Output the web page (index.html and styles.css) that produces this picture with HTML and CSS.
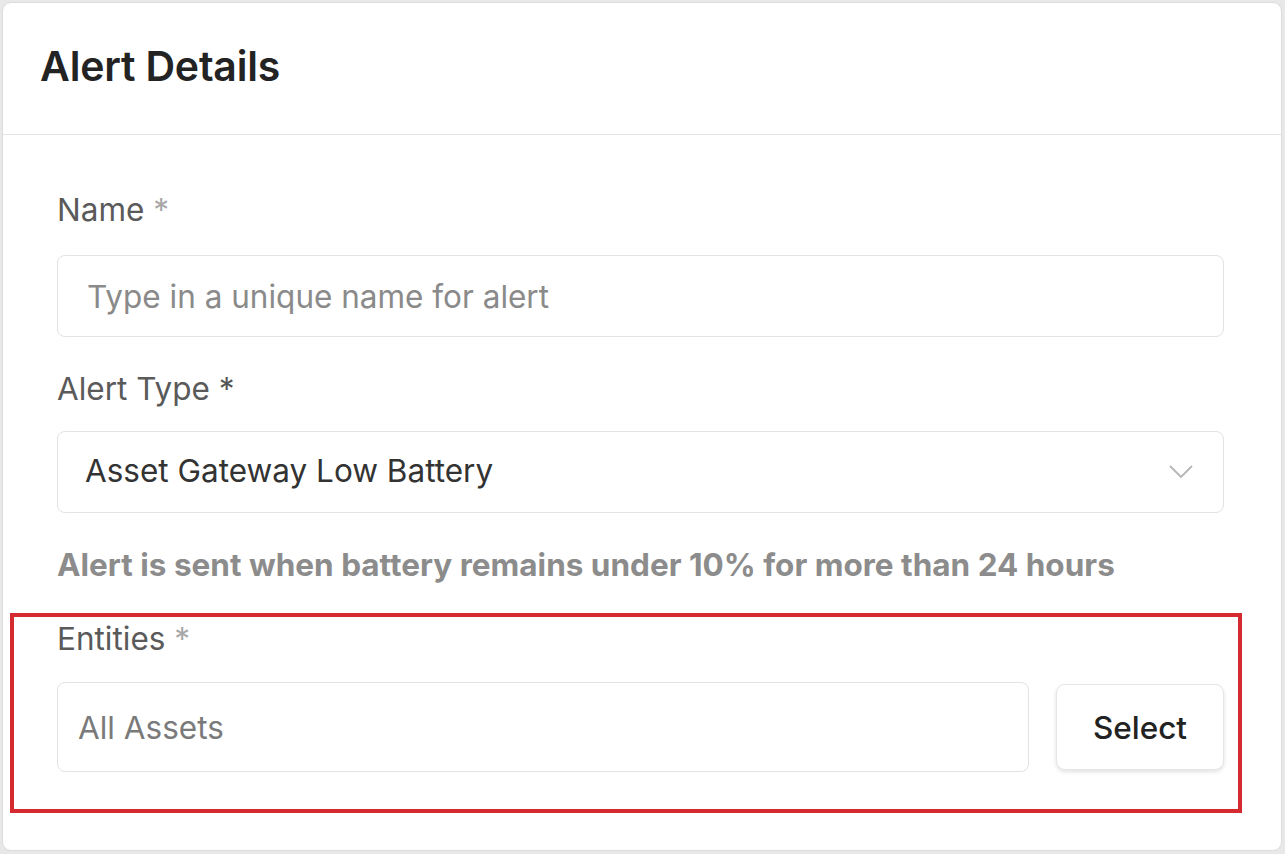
FILE: index.html
```html
<!DOCTYPE html>
<html lang="en">
<head>
<meta charset="utf-8">
<title>Alert Details</title>
<link rel="stylesheet" href="styles.css">
</head>
<body>
<div class="card">
  <div class="card-header">
    <h1 class="title">Alert Details</h1>
  </div>
  <div class="card-body">
    <div class="field">
      <label class="label">Name <span class="req">*</span></label>
      <div class="input placeholder">Type in a unique name for alert</div>
    </div>
    <div class="field">
      <label class="label label-type">Alert Type <span class="req dark">*</span></label>
      <div class="input select">
        <span class="value">Asset Gateway Low Battery</span>
        <svg class="chevron" width="26" height="16" viewBox="0 0 26 16" aria-hidden="true">
          <path d="M2 2 L13 13 L24 2" fill="none" stroke="#b5b5b5" stroke-width="1.8"/>
        </svg>
      </div>
      <p class="help">Alert is sent when battery remains under 10% for more than 24 hours</p>
    </div>
    <div class="field entities">
      <label class="label label-entities">Entities <span class="req">*</span></label>
      <div class="entity-row">
        <div class="input entity-input">All Assets</div>
        <button class="btn">Select</button>
      </div>
    </div>
  </div>
</div>
</body>
</html>
```

FILE: styles.css
```css
html, body {
  margin: 0;
  padding: 0;
}
body {
  background: #e8e8e8;
  font-family: Inter, "Noto Sans", "Liberation Sans", sans-serif;
  width: 1285px;
  height: 854px;
  overflow: hidden;
}
.card {
  box-sizing: border-box;
  margin: 2px 3px 0 2px;
  height: 849px;
  background: #fff;
  border: 1px solid #dcdcdc;
  border-radius: 9px;
}
.card-header {
  box-sizing: border-box;
  height: 132px;
  border-bottom: 1px solid #e4e4e4;
  display: flex;
  align-items: center;
  padding-left: 37px;
  padding-bottom: 6px;
}
.title {
  margin: 0;
  font-size: 41px;
  font-weight: 600;
  color: #232323;
  letter-spacing: -0.2px;
}
.card-body {
  padding: 55px 57px 0 54px;
}
.field {
  display: flex;
  flex-direction: column;
}
.label {
  font-size: 31.5px;
  line-height: 40px;
  color: #5a5a5a;
  margin-bottom: 25px;
}
.label-type {
  margin-bottom: 22px;
}
.label-entities {
  margin-bottom: 23px;
}
.req {
  color: #a8a8a8;
}
.req.dark {
  color: #555;
}
.input {
  box-sizing: border-box;
  height: 82px;
  border: 1.5px solid #e3e3e3;
  border-radius: 8px;
  display: flex;
  align-items: center;
  font-size: 31.5px;
  padding-left: 29px;
  margin-bottom: 32px;
}
.placeholder {
  color: #8a8a8a;
}
.select {
  justify-content: space-between;
  padding-left: 27px;
  padding-right: 29px;
  padding-bottom: 4px;
  color: #333;
  margin-bottom: 32px;
}
.chevron {
  display: block;
  margin-top: 4px;
}
.help {
  margin: 0 0 34px;
  font-size: 31.5px;
  line-height: 40px;
  font-weight: 700;
  color: #8c8c8c;
}
.entities {
  position: relative;
}
.entities::before {
  content: "";
  position: absolute;
  left: -47px;
  right: -18px;
  top: -6px;
  bottom: -41px;
  border: 4px solid #d52a2f;
  pointer-events: none;
}
.entity-row {
  display: flex;
  align-items: center;
  gap: 27px;
}
.entity-input {
  flex: 1;
  height: 90px;
  margin-bottom: 0;
  padding-left: 20px;
  color: #7a7a7a;
}
.btn {
  box-sizing: border-box;
  width: 168px;
  height: 86px;
  border: 1px solid #e6e6e6;
  border-radius: 9px;
  background: #fff;
  box-shadow: 0 2px 4px rgba(0,0,0,0.12);
  font-family: inherit;
  font-size: 31.5px;
  font-weight: 500;
  color: #222;
  cursor: pointer;
}
```
